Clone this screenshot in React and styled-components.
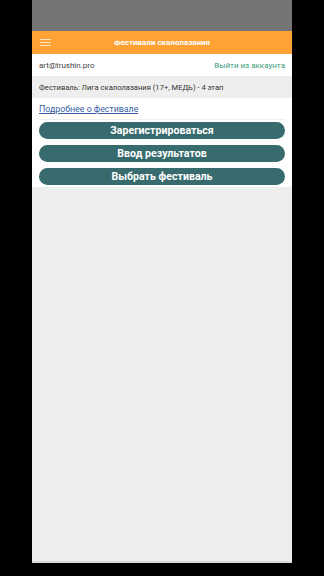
import styled, { createGlobalStyle } from "styled-components";

const GlobalStyle = createGlobalStyle`
    html, body {
        margin: 0;
        padding: 0;
        background: #000;
        font-family: Roboto, "Liberation Sans", Arial, sans-serif;
    }
`;

//전체 화면 (검은 배경)
const Screen = styled.div`
    width: 324px;
    height: 576px;
    background: #000;
    display: flex;
    justify-content: center;
    align-items: flex-start;
`;

//폰 화면
const Phone = styled.div`
    width: 260px;
    height: 563px;
    display: flex;
    flex-direction: column;
    background: #eeeeee;
    border-bottom: 2px solid #dcdcdc;
    box-sizing: border-box;
`;

const StatusBar = styled.div`
    height: 31px;
    background: #757575;
    flex-shrink: 0;
`;

const TopBar = styled.div`
    height: 23px;
    background: #ffa236;
    display: flex;
    align-items: center;
    position: relative;
    flex-shrink: 0;
`;

const MenuButton = styled.div`
    width: 11px;
    margin-left: 8px;
    display: flex;
    flex-direction: column;
    gap: 2px;

    > span {
        display: block;
        height: 1.2px;
        background: rgba(255, 255, 255, 0.7);
    }
`;

const Title = styled.div`
    position: absolute;
    left: 0;
    right: 0;
    text-align: center;
    color: #fff;
    font-size: 8px;
    font-weight: 700;
    pointer-events: none;
`;

const AccountRow = styled.div`
    height: 22px;
    background: #fff;
    display: flex;
    align-items: center;
    justify-content: space-between;
    padding: 0 7px;
    font-size: 8px;
`;

const Email = styled.span`
    color: #444;
`;

const Logout = styled.span`
    color: #3a9c7c;
`;

const FestivalRow = styled.div`
    height: 22px;
    display: flex;
    align-items: center;
    padding: 0 7px;
    font-size: 7.6px;
    color: #333;
    background: #eeeeee;
`;

const Content = styled.div`
    background: #fff;
    padding: 6px 7px 2px 7px;
    display: flex;
    flex-direction: column;
`;

const MoreLink = styled.a`
    color: #3b5ea6;
    font-size: 8.8px;
    text-decoration: underline;
    padding-bottom: 5px;
    border-bottom: 1px solid #f0f0f0;
    margin-bottom: 2px;
`;

const ActionButton = styled.button`
    height: 17px;
    border: none;
    border-radius: 9px;
    background: #386b6d;
    color: #fff;
    font-family: Roboto, "Liberation Sans", Arial, sans-serif;
    font-weight: 700;
    font-size: 10.6px;
    padding: 0;
    margin-bottom: ${props => props.last ? "0" : "6px"};
    cursor: pointer;
`;

export default function App() {
    return (
        <>
            <GlobalStyle />
            <Screen>
                <Phone>
                    <StatusBar />
                    <TopBar>
                        <MenuButton>
                            <span />
                            <span />
                            <span />
                        </MenuButton>
                        <Title>Фестивали скалолазания</Title>
                    </TopBar>
                    <AccountRow>
                        <Email>art@trushin.pro</Email>
                        <Logout>Выйти из аккаунта</Logout>
                    </AccountRow>
                    <FestivalRow>Фестиваль: Лига скалолазания (17+, МЕДЬ) - 4 этап</FestivalRow>
                    <Content>
                        <MoreLink>Подробнее о фестивале</MoreLink>
                        <ActionButton>Зарегистрироваться</ActionButton>
                        <ActionButton>Ввод результатов</ActionButton>
                        <ActionButton last>Выбрать фестиваль</ActionButton>
                    </Content>
                </Phone>
            </Screen>
        </>
    );
}
